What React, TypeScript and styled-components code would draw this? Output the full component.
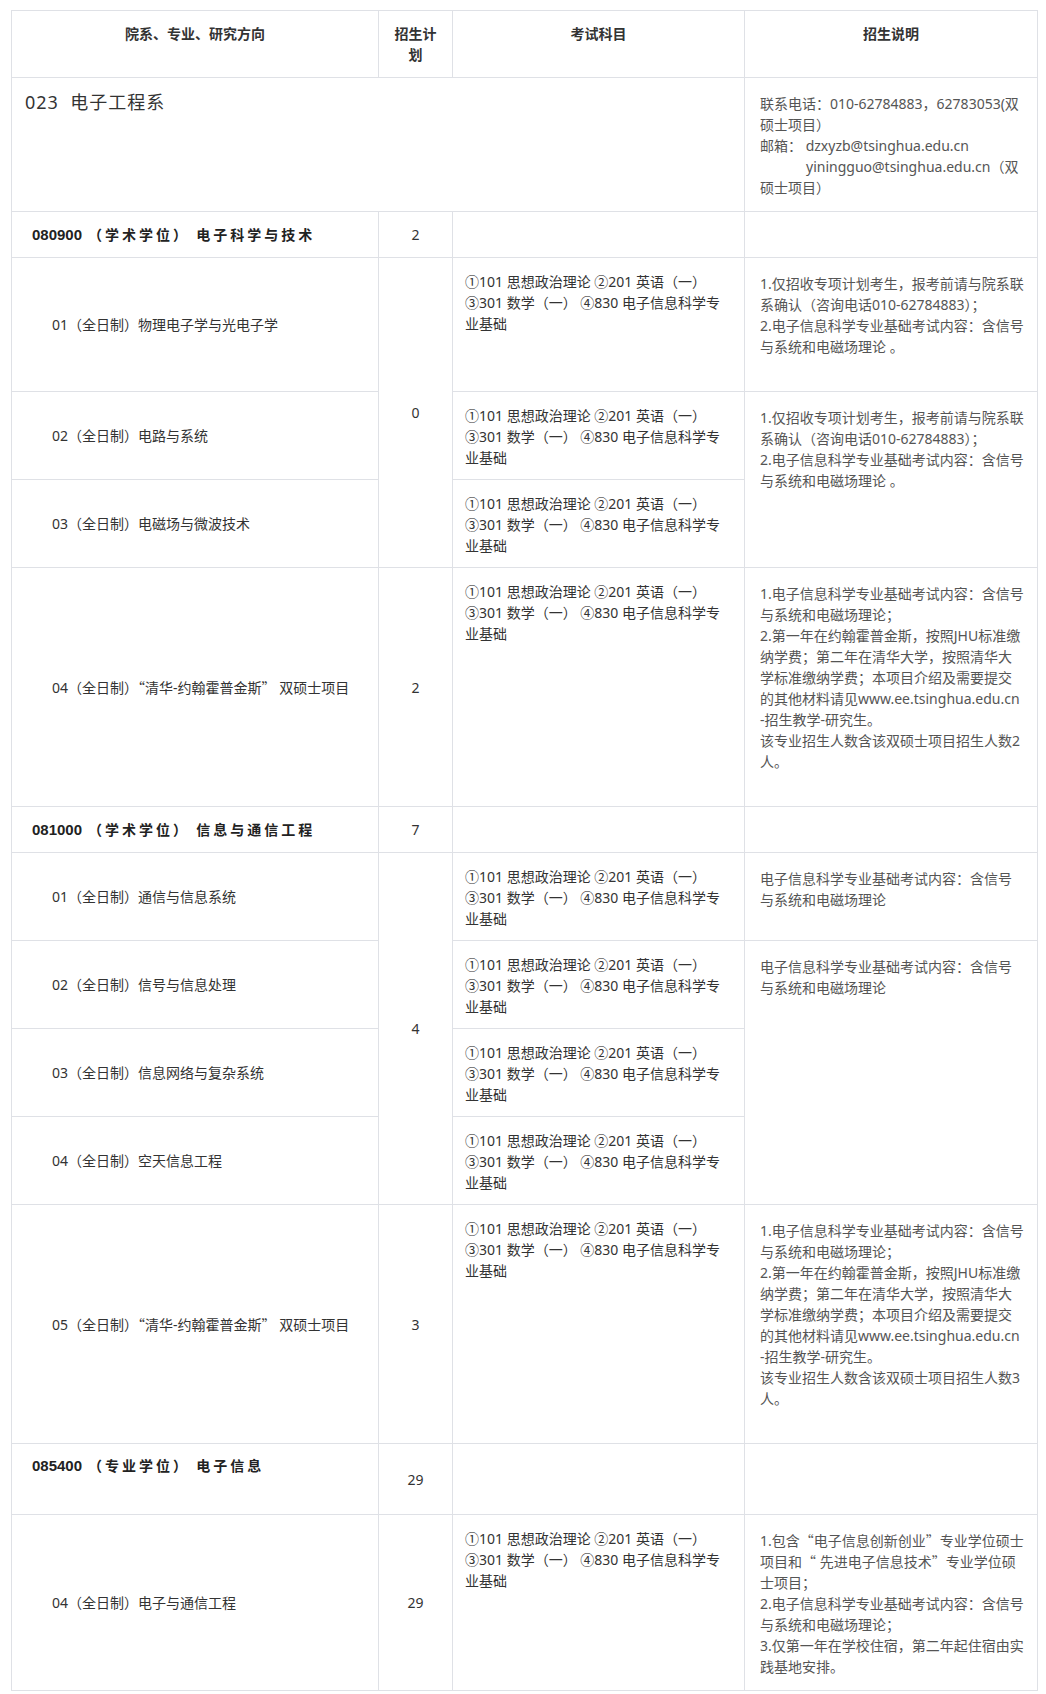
import React from "react";
import styled, { createGlobalStyle } from "styled-components";

const GlobalStyle = createGlobalStyle`
  html, body {
    margin: 0;
    padding: 0;
    background: #fff;
  }
  body {
    font-family: "Noto Sans", "Noto Sans CJK SC", sans-serif;
    font-size: 14px;
    color: #333;
  }
`;

const Page = styled.div`
  padding: 10px 9px 5px 11px;
`;

const Table = styled.table`
  width: 100%;
  border-collapse: collapse;
  table-layout: fixed;
  line-height: 21px;

  th, td {
    border: 1px solid #dfe1e6;
  }
`;

const Col = styled.col<{ $w: number }>`
  width: ${(p) => p.$w}px;
`;

const Row = styled.tr<{ $h: number }>`
  height: ${(p) => p.$h}px;
`;

const HeadCell = styled.th`
  padding: 12px;
  text-align: center;
  vertical-align: top;
  font-weight: 700;
  color: #333;
`;

const NameCell = styled.td<{ $indent?: number; $top?: boolean }>`
  padding: ${(p) => (p.$top ? "11px" : "0")} 12px 0 ${(p) => p.$indent ?? 40}px;
  vertical-align: ${(p) => (p.$top ? "top" : "middle")};
  color: #333;
`;

const DeptCell = styled.td`
  padding: 14px 12px 0 13px;
  vertical-align: top;
`;

const DeptTitle = styled.span`
  font-size: 18px;
  color: #333;
  letter-spacing: 1px;
`;

const MajorCode = styled.span`
  font-family: "Liberation Sans", "Noto Sans CJK SC", sans-serif;
  font-weight: 700;
  font-size: 15px;
  color: #222;
  margin-right: 6px;
`;

const MajorName = styled.span`
  font-family: "Noto Sans CJK SC", sans-serif;
  font-weight: 700;
  letter-spacing: 3px;
  color: #222;
`;

const PlanCell = styled.td`
  text-align: center;
  vertical-align: middle;
  color: #333;
`;

const ExamCell = styled.td`
  padding: 13px 10px 0 12px;
  vertical-align: top;
  color: #333;
`;

const NoteCell = styled.td`
  padding: 15px 6px 0 15px;
  vertical-align: top;
  color: #555;
`;

const Line = styled.span<{ $indent?: number }>`
  display: block;
  white-space: nowrap;
  padding-left: ${(p) => p.$indent ?? 0}px;
`;

// full-width Chinese quotation marks
const Quote = styled.span`
  font-family: "Noto Sans CJK SC", sans-serif;
`;

const quoted = (text: string) =>
  text.split(/([“”])/).map((part, i) =>
    part === "“" || part === "”" ? <Quote key={i}>{part}</Quote> : part
  );

const EXAM = [
  "①101 思想政治理论 ②201 英语（一）",
  "③301 数学（一） ④830 电子信息科学专",
  "业基础",
];

const NOTE_SPECIAL = [
  "1.仅招收专项计划考生，报考前请与院系联",
  "系确认（咨询电话010-62784883）；",
  "2.电子信息科学专业基础考试内容：含信号",
  "与系统和电磁场理论 。",
];

const NOTE_BASIC = ["电子信息科学专业基础考试内容：含信号", "与系统和电磁场理论"];

const jhuNote = (n: number) => [
  "1.电子信息科学专业基础考试内容：含信号",
  "与系统和电磁场理论；",
  "2.第一年在约翰霍普金斯，按照JHU标准缴",
  "纳学费；第二年在清华大学，按照清华大",
  "学标准缴纳学费；本项目介绍及需要提交",
  "的其他材料请见www.ee.tsinghua.edu.cn",
  "-招生教学-研究生。",
  `该专业招生人数含该双硕士项目招生人数${n}`,
  "人。",
];

const NOTE_PRO = [
  "1.包含“电子信息创新创业”专业学位硕士",
  "项目和“ 先进电子信息技术”专业学位硕",
  "士项目；",
  "2.电子信息科学专业基础考试内容：含信号",
  "与系统和电磁场理论；",
  "3.仅第一年在学校住宿，第二年起住宿由实",
  "践基地安排。",
];

const Lines = ({ items }: { items: string[] }) => (
  <>
    {items.map((t, i) => (
      <Line key={i}>{quoted(t)}</Line>
    ))}
  </>
);

const Exam = () => (
  <ExamCell>
    <Lines items={EXAM} />
  </ExamCell>
);

const App = () => (
  <Page>
    <GlobalStyle />
    <Table>
      <colgroup>
        <Col $w={367} />
        <Col $w={74} />
        <Col $w={292} />
        <Col $w={293} />
      </colgroup>
      <thead>
        <Row $h={66}>
          <HeadCell>院系、专业、研究方向</HeadCell>
          <HeadCell>招生计划</HeadCell>
          <HeadCell>考试科目</HeadCell>
          <HeadCell>招生说明</HeadCell>
        </Row>
      </thead>
      <tbody>
        <Row $h={134}>
          <DeptCell colSpan={3}>
            <DeptTitle>023&nbsp;&nbsp;电子工程系</DeptTitle>
          </DeptCell>
          <NoteCell>
            <Line>联系电话：010-62784883，62783053(双</Line>
            <Line>硕士项目）</Line>
            <Line>邮箱： dzxyzb@tsinghua.edu.cn</Line>
            <Line $indent={46}>yiningguo@tsinghua.edu.cn（双</Line>
            <Line>硕士项目）</Line>
          </NoteCell>
        </Row>

        <Row $h={46}>
          <NameCell $indent={20}>
            <MajorCode>080900</MajorCode>
            <MajorName>（学术学位） 电子科学与技术</MajorName>
          </NameCell>
          <PlanCell>2</PlanCell>
          <td />
          <td />
        </Row>
        <Row $h={134}>
          <NameCell>01（全日制）物理电子学与光电子学</NameCell>
          <PlanCell rowSpan={3}>0</PlanCell>
          <Exam />
          <NoteCell>
            <Lines items={NOTE_SPECIAL} />
          </NoteCell>
        </Row>
        <Row $h={88}>
          <NameCell>02（全日制）电路与系统</NameCell>
          <Exam />
          <NoteCell rowSpan={2}>
            <Lines items={NOTE_SPECIAL} />
          </NoteCell>
        </Row>
        <Row $h={88}>
          <NameCell>03（全日制）电磁场与微波技术</NameCell>
          <Exam />
        </Row>
        <Row $h={239}>
          <NameCell>{quoted("04（全日制）“清华-约翰霍普金斯” 双硕士项目")}</NameCell>
          <PlanCell>2</PlanCell>
          <Exam />
          <NoteCell>
            <Lines items={jhuNote(2)} />
          </NoteCell>
        </Row>

        <Row $h={46}>
          <NameCell $indent={20}>
            <MajorCode>081000</MajorCode>
            <MajorName>（学术学位） 信息与通信工程</MajorName>
          </NameCell>
          <PlanCell>7</PlanCell>
          <td />
          <td />
        </Row>
        <Row $h={88}>
          <NameCell>01（全日制）通信与信息系统</NameCell>
          <PlanCell rowSpan={4}>4</PlanCell>
          <Exam />
          <NoteCell>
            <Lines items={NOTE_BASIC} />
          </NoteCell>
        </Row>
        <Row $h={88}>
          <NameCell>02（全日制）信号与信息处理</NameCell>
          <Exam />
          <NoteCell rowSpan={3}>
            <Lines items={NOTE_BASIC} />
          </NoteCell>
        </Row>
        <Row $h={88}>
          <NameCell>03（全日制）信息网络与复杂系统</NameCell>
          <Exam />
        </Row>
        <Row $h={88}>
          <NameCell>04（全日制）空天信息工程</NameCell>
          <Exam />
        </Row>
        <Row $h={239}>
          <NameCell>{quoted("05（全日制）“清华-约翰霍普金斯” 双硕士项目")}</NameCell>
          <PlanCell>3</PlanCell>
          <Exam />
          <NoteCell>
            <Lines items={jhuNote(3)} />
          </NoteCell>
        </Row>

        <Row $h={71}>
          <NameCell $indent={20} $top>
            <MajorCode>085400</MajorCode>
            <MajorName>（专业学位） 电子信息</MajorName>
          </NameCell>
          <PlanCell>29</PlanCell>
          <td />
          <td />
        </Row>
        <Row $h={176}>
          <NameCell>04（全日制）电子与通信工程</NameCell>
          <PlanCell>29</PlanCell>
          <Exam />
          <NoteCell>
            <Lines items={NOTE_PRO} />
          </NoteCell>
        </Row>
      </tbody>
    </Table>
  </Page>
);

export default App;
